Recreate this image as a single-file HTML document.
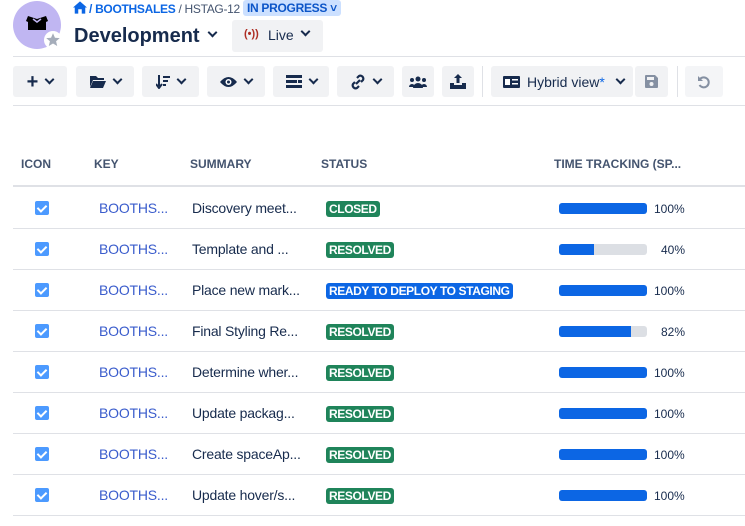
<!DOCTYPE html>
<html><head><meta charset="utf-8"><style>
*{margin:0;padding:0;box-sizing:border-box}
body{width:745px;height:526px;background:#fff;font-family:"Liberation Sans",sans-serif;color:#172b4d;position:relative;overflow:hidden}
.a{position:absolute}
.btn{position:absolute;top:66px;height:31px;background:#f1f2f4;border-radius:3px;display:flex;align-items:center;justify-content:center;gap:8px}
.hr{position:absolute;left:13px;right:0;height:1px;background:#dfe1e6}
.th{position:absolute;top:157px;font-size:12px;font-weight:bold;color:#44546f}
.cb{position:absolute;left:35px;width:14px;height:14px;background:#4c9aff;border-radius:2px}
.cb:after{content:"";position:absolute;left:4px;top:2px;width:4px;height:7px;border:solid #fff;border-width:0 2px 2px 0;transform:rotate(45deg)}
.key{position:absolute;left:99px;font-size:14px;color:#3a5ccc;letter-spacing:-0.2px}
.sum{position:absolute;left:192px;font-size:14px;color:#172b4d;letter-spacing:-0.2px}
.st{position:absolute;left:326px;height:16px;line-height:16px;padding:0 3px;font-size:12px;font-weight:bold;color:#fff;border-radius:3px;background:#1f845a;letter-spacing:-0.4px}
.bar{position:absolute;left:559px;width:88px;height:11px;border-radius:3px;background:#dcdfe4;overflow:hidden}
.bar i{display:block;height:100%;background:#0c66e4}
.pc{position:absolute;font-size:12px;color:#172b4d}
.chev{width:7px;height:7px;border:solid #172b4d;border-width:0 2px 2px 0;transform:rotate(45deg);margin-top:-4px}
</style></head><body>
<div class="a" style="left:13px;top:1px;width:48px;height:48px;border-radius:50%;background:#c0b6f2"></div>
<svg class="a" style="left:25px;top:13px" width="24" height="20" viewBox="0 0 24 20"><path d="M3 3 L12 6 L21 3 L23 8 L21 9 V17 H3 V9 L1 8 Z" fill="#000"/><path d="M8 6 L12 9 L16 6" stroke="#c0b6f2" stroke-width="1.5" fill="none"/></svg>
<svg class="a" style="left:44px;top:31px" width="18" height="18" viewBox="0 0 24 24"><circle cx="12" cy="12" r="12" fill="#fff"/><path d="M12 3l2.6 6 6.4.5-4.9 4.2 1.5 6.3L12 16.6 6.4 20l1.5-6.3L3 9.5l6.4-.5z" fill="#a5adba"/></svg>
<svg class="a" style="left:73px;top:1px" width="14" height="13" viewBox="0 0 16 14"><path d="M8 0L0 7h2v7h4V9h4v5h4V7h2z" fill="#0c66e4"/></svg>
<div class="a" style="left:89px;top:2px;font-size:12px;letter-spacing:-0.3px;color:#0c66e4;font-weight:bold">/ BOOTHSALES <span style="color:#44546f;font-weight:normal">/ HSTAG-12</span></div>
<div class="a" style="left:243px;top:0px;height:16px;width:98px;background:#cce0ff;border-radius:3px;font-size:12px;letter-spacing:-0.3px;font-weight:bold;color:#0c55c8;padding-left:4px;line-height:16px">IN PROGRESS ˅</div>
<div class="a" style="left:74px;top:25px;font-size:20px;font-weight:bold;color:#172b4d">Development</div>
<div class="a chev" style="left:209px;top:33px"></div>
<div class="a" style="left:232px;top:20px;width:91px;height:32px;background:#f1f2f4;border-radius:3px"></div>
<div class="a" style="left:244px;top:28px;font-size:11px;color:#ae2e24;font-weight:bold">(•))</div>
<div class="a" style="left:268px;top:27px;font-size:14px;color:#172b4d">Live</div>
<div class="a chev" style="left:302px;top:32px"></div>
<div class="hr" style="top:56px"></div>
<div class="btn" style="left:13px;width:54px"><span style="font-size:20px;font-weight:bold;line-height:1">+</span><div class="chev"></div></div>
<div class="btn" style="left:76px;width:58px"><svg width="16" height="13" viewBox="0 0 16 13"><path d="M0 1h6l2 2h6v2H3L0 12z M3 6h13l-3 7H0z" fill="#172b4d"/></svg><div class="chev"></div></div>
<div class="btn" style="left:142px;width:57px"><svg width="14" height="14" viewBox="0 0 14 14"><path d="M3 0v11M0 9l3 4 3-4M7 2h7M7 6h5M7 10h3" stroke="#172b4d" stroke-width="2" fill="none"/></svg><div class="chev"></div></div>
<div class="btn" style="left:207px;width:58px"><svg width="17" height="12" viewBox="0 0 17 12"><path d="M0 6Q8.5-4 17 6Q8.5 16 0 6z" fill="#172b4d"/><circle cx="8.5" cy="6" r="3" fill="#fff"/><circle cx="8.5" cy="6" r="1.5" fill="#172b4d"/></svg><div class="chev"></div></div>
<div class="btn" style="left:273px;width:56px"><svg width="16" height="13" viewBox="0 0 16 13"><rect y="0" width="16" height="3" fill="#172b4d"/><rect y="5" width="11" height="3" fill="#172b4d"/><rect x="12" y="5" width="4" height="3" fill="#172b4d"/><rect y="10" width="16" height="3" fill="#172b4d"/></svg><div class="chev"></div></div>
<div class="btn" style="left:337px;width:57px"><svg width="16" height="16" viewBox="0 0 16 16"><path d="M6 10l4-4M7 4l2-2a3 3 0 014 4l-2 2M9 12l-2 2a3 3 0 01-4-4l2-2" stroke="#172b4d" stroke-width="2.2" fill="none"/></svg><div class="chev"></div></div>
<div class="btn" style="left:402px;width:32px"><svg width="18" height="12" viewBox="0 0 18 12"><circle cx="9" cy="3" r="2.5" fill="#172b4d"/><circle cx="3" cy="4" r="2" fill="#172b4d"/><circle cx="15" cy="4" r="2" fill="#172b4d"/><path d="M4 12a5 5 0 0110 0zM0 11a3 3 0 016 0zM12 11a3 3 0 016 0z" fill="#172b4d"/></svg></div>
<div class="btn" style="left:442px;width:32px"><svg width="16" height="15" viewBox="0 0 16 15"><path d="M8 0l4 4H9.5v5h-3V4H4z M0 9h4v2h8V9h4v6H0z" fill="#172b4d"/></svg></div>
<div class="a" style="left:482px;top:66px;width:1px;height:31px;background:#dfe1e6"></div>
<div class="btn" style="left:491px;width:142px;justify-content:flex-start;padding-left:12px"><svg width="17" height="12" viewBox="0 0 17 12"><rect width="17" height="12" rx="1" fill="#172b4d"/><rect x="2" y="3" width="5" height="6" fill="#fff"/><rect x="9" y="3" width="6" height="1.5" fill="#fff"/><rect x="9" y="7" width="6" height="1.5" fill="#fff"/></svg><span style="font-size:14px;margin-left:-1px">Hybrid view<span style="color:#0c66e4">*</span></span><div class="chev" style="margin-left:4px"></div></div>
<div class="btn" style="left:635px;width:33px"><svg width="13" height="13" viewBox="0 0 13 13"><path d="M0 1a1 1 0 011-1h9l3 3v9a1 1 0 01-1 1H1a1 1 0 01-1-1z" fill="#8590a2"/><rect x="2" y="2" width="7" height="3" fill="#f1f2f4"/><circle cx="6.5" cy="9" r="2" fill="#f1f2f4"/></svg></div>
<div class="a" style="left:677px;top:66px;width:1px;height:31px;background:#dfe1e6"></div>
<div class="btn" style="left:685px;width:38px;background:#f4f5f7"><svg width="14" height="14" viewBox="0 0 14 14"><path d="M3 4A5 5 0 1 1 2.5 10" stroke="#8590a2" stroke-width="2" fill="none"/><path d="M1 1v5h5z" fill="#8590a2"/></svg></div>
<div class="hr" style="top:105px"></div>
<div class="th" style="left:21px">ICON</div>
<div class="th" style="left:94px">KEY</div>
<div class="th" style="left:190px">SUMMARY</div>
<div class="th" style="left:321px">STATUS</div>
<div class="th" style="left:554px">TIME TRACKING (SP...</div>
<div class="hr" style="top:185px;height:2px"></div>

<div class="cb" style="top:201px"></div><div class="key" style="top:200px">BOOTHS...</div><div class="sum" style="top:200px">Discovery meet...</div><div class="st" style="top:201px">CLOSED</div><div class="bar" style="top:203px"><i style="width:100%"></i></div><div class="pc" style="left:654px;top:202px">100%</div><div class="hr" style="top:228px"></div>
<div class="cb" style="top:242px"></div><div class="key" style="top:241px">BOOTHS...</div><div class="sum" style="top:241px">Template and ...</div><div class="st" style="top:242px">RESOLVED</div><div class="bar" style="top:244px"><i style="width:40%"></i></div><div class="pc" style="left:661px;top:243px">40%</div><div class="hr" style="top:269px"></div>
<div class="cb" style="top:283px"></div><div class="key" style="top:282px">BOOTHS...</div><div class="sum" style="top:282px">Place new mark...</div><div class="st" style="top:283px;background:#0c66e4">READY TO DEPLOY TO STAGING</div><div class="bar" style="top:285px"><i style="width:100%"></i></div><div class="pc" style="left:654px;top:284px">100%</div><div class="hr" style="top:310px"></div>
<div class="cb" style="top:324px"></div><div class="key" style="top:323px">BOOTHS...</div><div class="sum" style="top:323px">Final Styling Re...</div><div class="st" style="top:324px">RESOLVED</div><div class="bar" style="top:326px"><i style="width:82%"></i></div><div class="pc" style="left:661px;top:325px">82%</div><div class="hr" style="top:351px"></div>
<div class="cb" style="top:365px"></div><div class="key" style="top:364px">BOOTHS...</div><div class="sum" style="top:364px">Determine wher...</div><div class="st" style="top:365px">RESOLVED</div><div class="bar" style="top:367px"><i style="width:100%"></i></div><div class="pc" style="left:654px;top:366px">100%</div><div class="hr" style="top:392px"></div>
<div class="cb" style="top:406px"></div><div class="key" style="top:405px">BOOTHS...</div><div class="sum" style="top:405px">Update packag...</div><div class="st" style="top:406px">RESOLVED</div><div class="bar" style="top:408px"><i style="width:100%"></i></div><div class="pc" style="left:654px;top:407px">100%</div><div class="hr" style="top:433px"></div>
<div class="cb" style="top:447px"></div><div class="key" style="top:446px">BOOTHS...</div><div class="sum" style="top:446px">Create spaceAp...</div><div class="st" style="top:447px">RESOLVED</div><div class="bar" style="top:449px"><i style="width:100%"></i></div><div class="pc" style="left:654px;top:448px">100%</div><div class="hr" style="top:474px"></div>
<div class="cb" style="top:488px"></div><div class="key" style="top:487px">BOOTHS...</div><div class="sum" style="top:487px">Update hover/s...</div><div class="st" style="top:488px">RESOLVED</div><div class="bar" style="top:490px"><i style="width:100%"></i></div><div class="pc" style="left:654px;top:489px">100%</div><div class="hr" style="top:515px"></div>
</body></html>
